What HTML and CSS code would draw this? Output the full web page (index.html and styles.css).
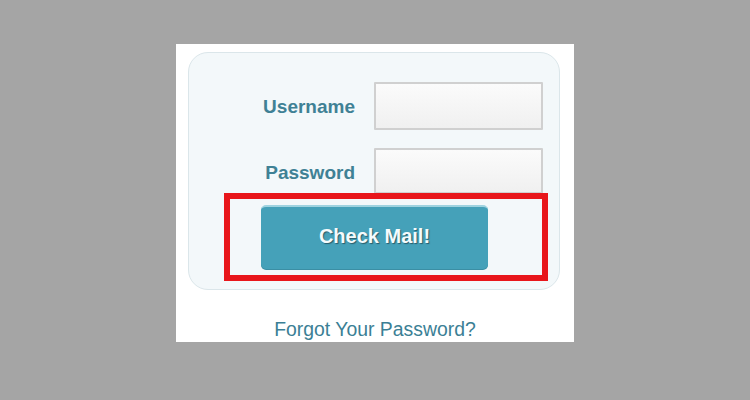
FILE: index.html
```html
<!DOCTYPE html>
<html>
<head>
<meta charset="utf-8">
<link rel="stylesheet" href="styles.css">
</head>
<body>
<div class="panel">
  <div class="card">
    <div class="fields">
      <label class="label" for="u">Username</label>
      <input class="input user" id="u" type="text">
      <label class="label" for="p">Password</label>
      <input class="input pass" id="p" type="password">
    </div>
    <button class="btn">Check Mail!</button>
  </div>
  <a class="forgot" href="#">Forgot Your Password?</a>
  <div class="highlight"></div>
</div>
</body>
</html>
```
FILE: styles.css
```css
html, body {
  margin: 0;
  padding: 0;
}
body {
  background: #a5a5a5;
  width: 750px;
  height: 400px;
  font-family: "Liberation Sans", Arial, sans-serif;
}
.panel {
  position: relative;
  box-sizing: border-box;
  margin: 44px 0 0 176px;
  width: 398px;
  height: 298px;
  background: #ffffff;
  padding: 8px 14px 0 12px;
  display: flex;
  flex-direction: column;
}
.card {
  box-sizing: border-box;
  width: 372px;
  height: 238px;
  border: 1px solid #dbe6ea;
  border-radius: 20px;
  background: #f3f8fa;
  padding-top: 29px;
  display: flex;
  flex-direction: column;
}
.fields {
  display: grid;
  grid-template-columns: 166px 169px;
  grid-template-rows: 48px 46px;
  column-gap: 19px;
  row-gap: 18px;
  align-items: center;
}
.label {
  text-align: right;
  font-weight: bold;
  font-size: 19px;
  padding-top: 2px;
  color: #3f8195;
}
.label + .input + .label {
  padding-top: 4px;
}
.input {
  box-sizing: border-box;
  width: 169px;
  height: 100%;
  margin: 0;
  border: 2px solid #d0d0d0;
  border-radius: 1px;
  background: linear-gradient(#fbfbfb, #f0f0f0);
  outline: none;
}
.btn {
  box-sizing: border-box;
  margin: 11px 0 0 72px;
  width: 227px;
  height: 64px;
  border: none;
  border-top: 2px solid #9fd3e0;
  border-radius: 5px;
  background: #45a1b9;
  box-shadow: 0 1px 0 #3b8ea4;
  color: #f4fbfd;
  font-family: "Liberation Sans", Arial, sans-serif;
  font-weight: bold;
  font-size: 20px;
  text-shadow: 1px 1px 1px #2a5c6a;
  padding: 0 0 4px 0;
}
.forgot {
  margin-top: 28px;
  align-self: center;
  margin-left: 2px;
  font-size: 19.4px;
  line-height: 22px;
  color: #3b7f95;
  text-decoration: none;
}
.highlight {
  position: absolute;
  left: 48px;
  top: 149px;
  width: 324px;
  height: 88px;
  box-sizing: border-box;
  border: 6px solid #e8161b;
}
```
